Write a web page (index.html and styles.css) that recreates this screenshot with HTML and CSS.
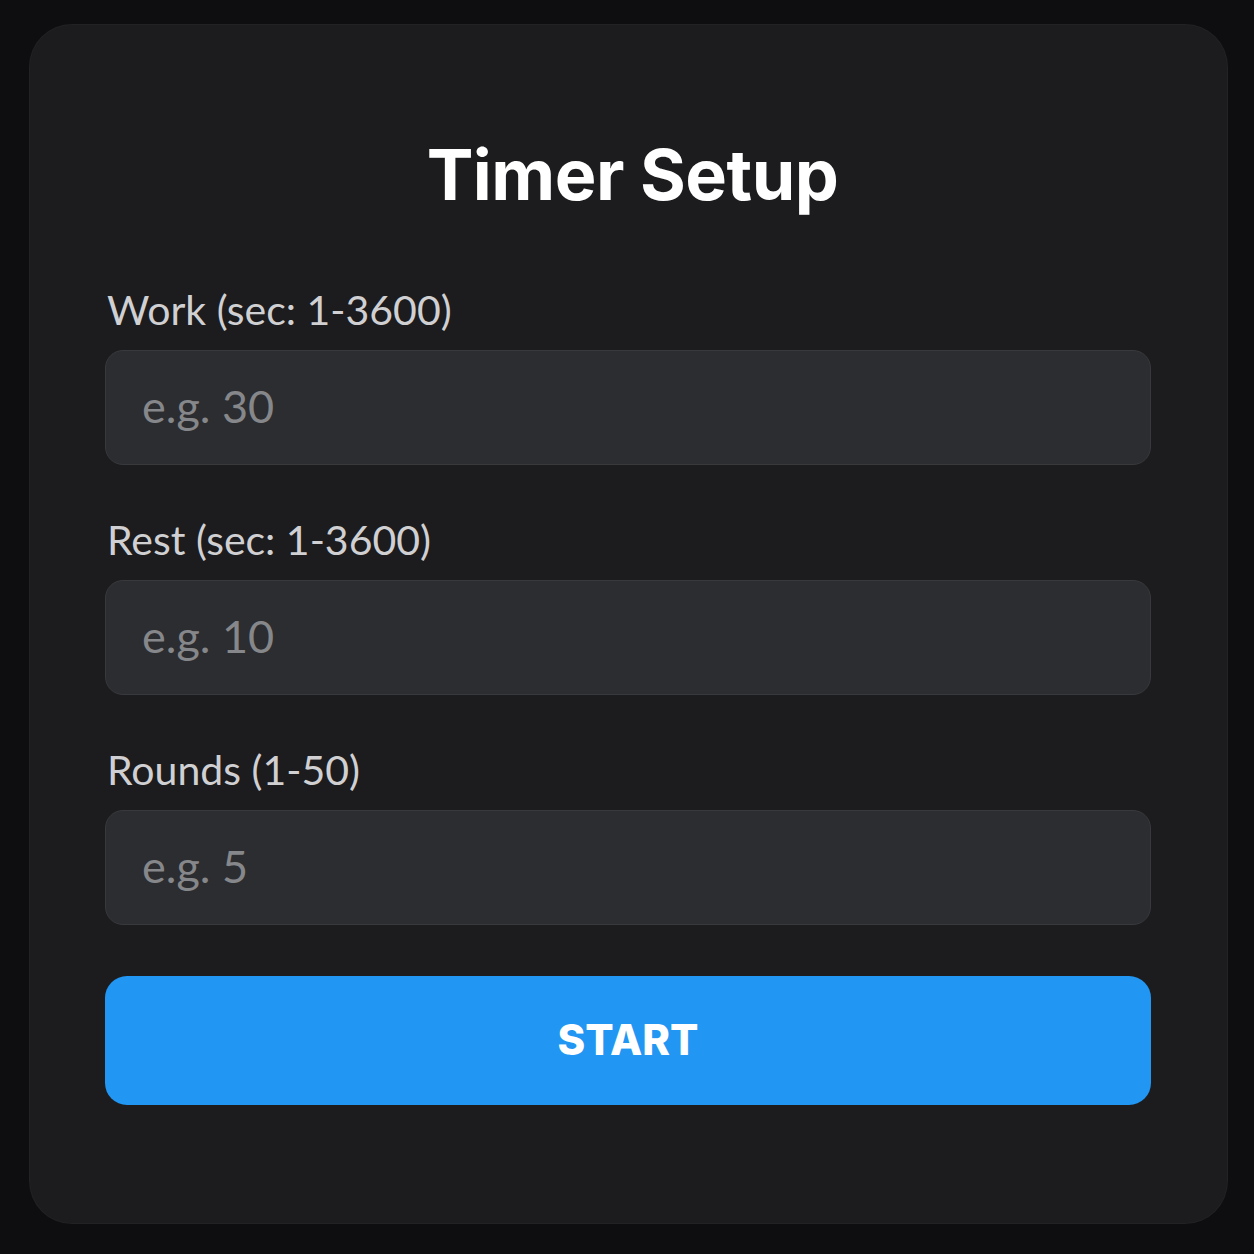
FILE: index.html
```html
<!DOCTYPE html>
<html>
<head>
<meta charset="utf-8">
<link rel="stylesheet" href="styles.css">
</head>
<body>
<div class="card">
  <h1 class="title">Timer Setup</h1>
  <div class="field">
    <label class="label">Work (sec: 1-3600)</label>
    <input class="input" type="text" placeholder="e.g. 30">
  </div>
  <div class="field">
    <label class="label">Rest (sec: 1-3600)</label>
    <input class="input" type="text" placeholder="e.g. 10">
  </div>
  <div class="field">
    <label class="label">Rounds (1-50)</label>
    <input class="input" type="text" placeholder="e.g. 5">
  </div>
  <button class="start">START</button>
</div>
</body>
</html>
```
FILE: styles.css
```css
html, body {
  margin: 0;
  padding: 0;
  background: #0e0e10;
  width: 1254px;
  height: 1254px;
}
body {
  padding: 25px 27px 31px 30px;
  box-sizing: border-box;
}
.card {
  box-sizing: border-box;
  width: 1197px;
  height: 1198px;
  background: #1c1c1e;
  border-radius: 42px;
  padding: 132px 76px 0 75px;
  display: flex;
  flex-direction: column;
  font-family: Lato, "Noto Sans", sans-serif;
  box-shadow: 0 0 0 1px #222225;
}
.title {
  margin: -25px 0 68px 0;
  padding-left: 9px;
  text-align: center;
  color: #ffffff;
  font-family: Inter, "Noto Sans", sans-serif;
  font-weight: 700;
  font-size: 70px;
  line-height: 86px;
  letter-spacing: -0.5px;
}
.field {
  display: flex;
  flex-direction: column;
  gap: 16px;
  margin-bottom: 51px;
}
.label {
  color: #d0d0d3;
  font-size: 41px;
  line-height: 48px;
  padding-left: 2px;
}
.input {
  box-sizing: border-box;
  height: 115px;
  width: 100%;
  background: #2c2d30;
  border: 1px solid #38393c;
  border-radius: 18px;
  padding: 0 36px 4px;
  font-family: Lato, "Noto Sans", sans-serif;
  font-size: 45px;
  color: #e0e0e0;
  outline: none;
}
.input::placeholder {
  color: #86878a;
}
.start {
  height: 129px;
  width: 100%;
  border: none;
  border-radius: 22px;
  background: #2196f3;
  color: #ffffff;
  font-family: Inter, "Noto Sans", sans-serif;
  font-weight: 800;
  font-size: 42px;
  letter-spacing: 0;
  padding-bottom: 3px;
  cursor: pointer;
}
```
